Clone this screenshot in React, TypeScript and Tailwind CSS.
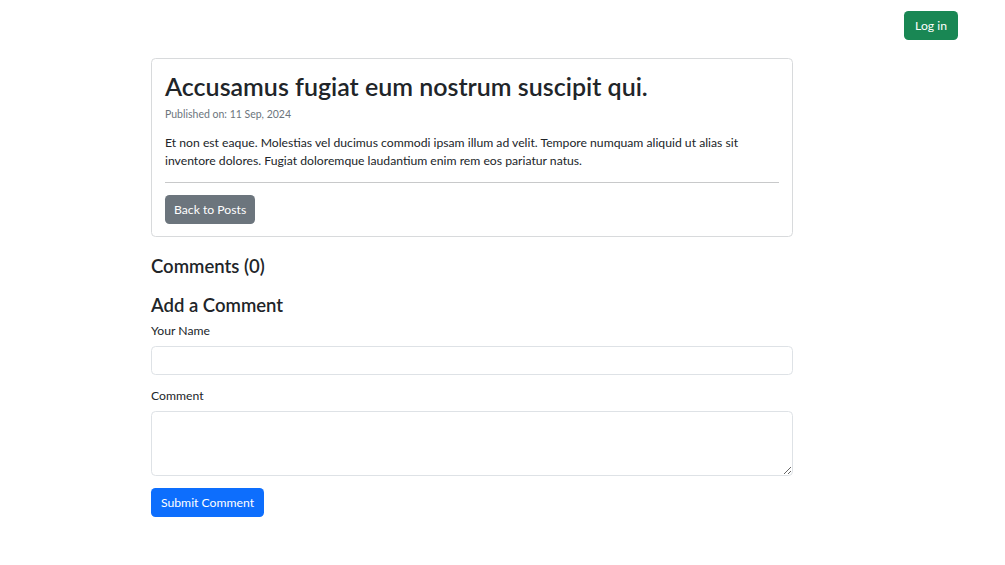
import React from "react";

export default function App() {
  return (
    <div
      className="min-h-[565px] w-full bg-white text-[#212529] text-[12.2px] leading-[18px]"
      style={{ fontFamily: "Lato, 'Noto Sans', sans-serif" }}
    >
      <div className="flex justify-end pt-[11px] pr-[47px]">
        <button className="h-[29px] rounded-[4.5px] bg-[#198754] px-[11px] text-[12.2px] text-white">
          Log in
        </button>
      </div>
      <div className="ml-[151px] mt-[18px] w-[642px]">
        <div className="rounded-[4.5px] border border-[#d8dadc] px-[13px] py-[12px]">
          <h2 className="text-[25px] leading-[30px] font-semibold mb-[6px]">
            Accusamus fugiat eum nostrum suscipit qui.
          </h2>
          <p className="text-[10.5px] leading-[15px] text-[#6c757d] mb-[12px]">Published on: 11 Sep, 2024</p>
          <p className="mb-[12px]">
            Et non est eaque. Molestias vel ducimus commodi ipsam illum ad velit. Tempore numquam aliquid ut alias sit
            inventore dolores. Fugiat doloremque laudantium enim rem eos pariatur natus.
          </p>
          <hr className="border-t border-[#c8c9ca] mb-[12px]" />
          <button className="h-[29px] rounded-[4.5px] bg-[#6c757d] px-[9px] text-[12.2px] text-white">
            Back to Posts
          </button>
        </div>
        <h4 className="mt-[18px] text-[18.5px] leading-[22px] font-semibold">Comments (0)</h4>
        <h4 className="mt-[17px] mb-[6px] text-[18.5px] leading-[22px] font-semibold">Add a Comment</h4>
        <div className="mb-[12px]">
          <label className="block mb-[6px]">Your Name</label>
          <input className="block h-[29px] w-full rounded-[4.5px] border border-[#dee2e6] px-[9px] outline-none" />
        </div>
        <div className="mb-[12px]">
          <label className="block mb-[6px]">Comment</label>
          <textarea className="block h-[65px] w-full rounded-[4.5px] border border-[#dee2e6] px-[9px] py-[4px] outline-none" />
        </div>
        <button className="h-[29px] rounded-[4.5px] bg-[#0d6efd] px-[10px] text-[12.2px] text-white">
          Submit Comment
        </button>
      </div>
    </div>
  );
}
